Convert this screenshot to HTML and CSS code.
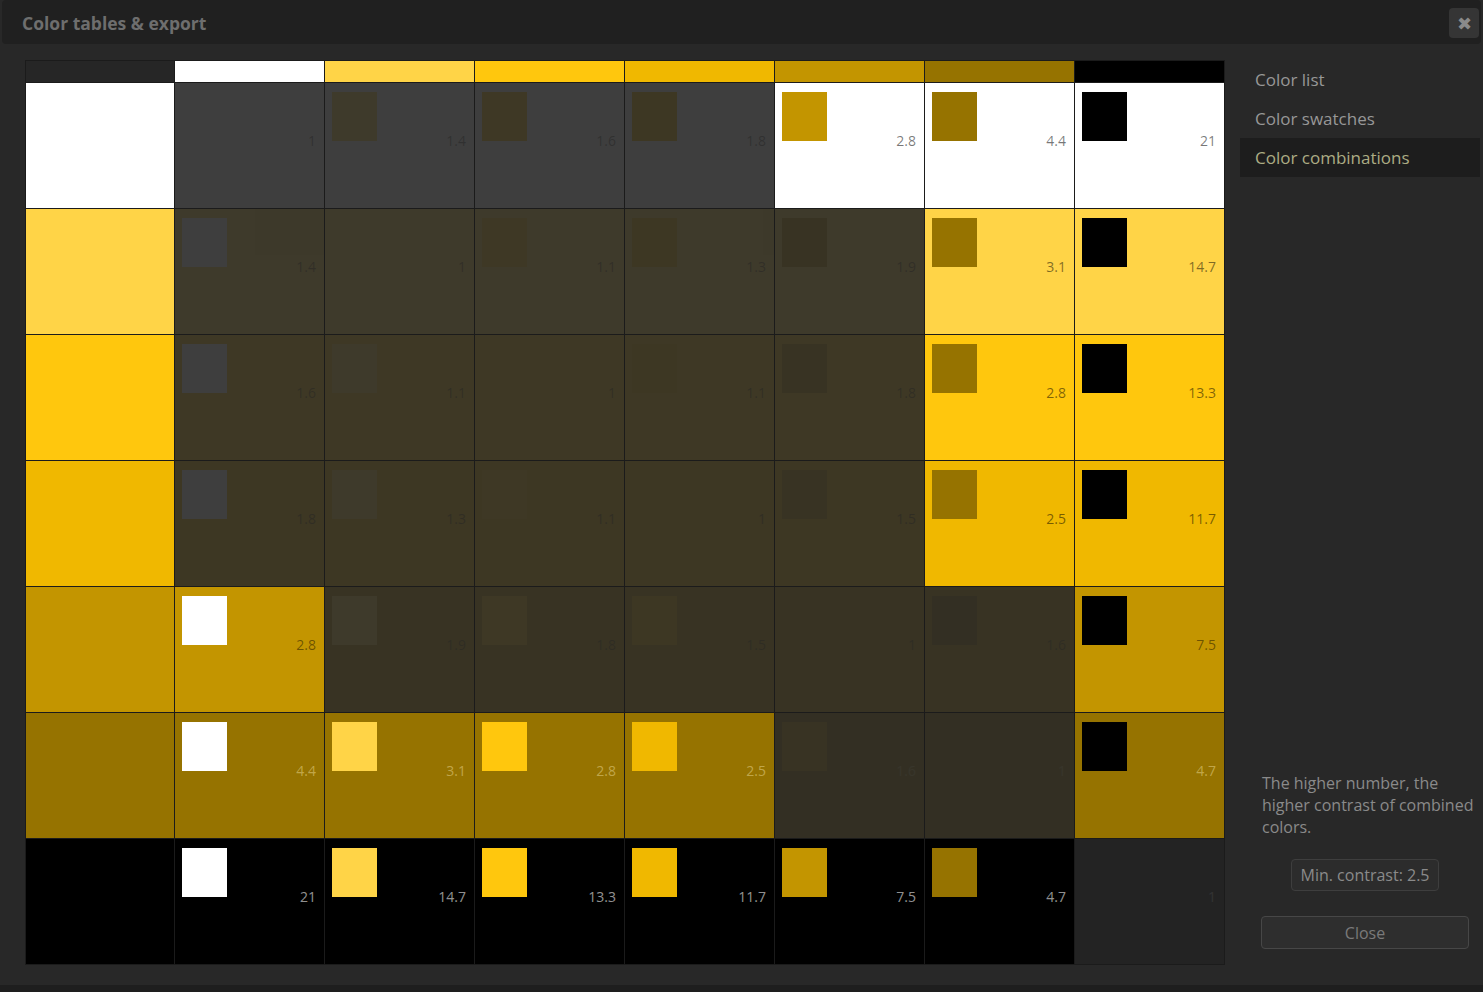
FILE: index.html
```html
<!DOCTYPE html>
<html lang="en">
<head>
    <meta charset="UTF-8">
    <title>Color tables &amp; export</title>
    <link rel="stylesheet" href="styles.css">
</head>
<body>

<div class="dialog">
    <div class="titlebar">
        <span class="title">Color tables &amp; export</span>
        <span class="close-x">&#10006;</span>
    </div>

    <div class="content">
        <div class="grid" id="grid"></div>

        <div class="side">
            <div class="menu">
                <div class="menu-item">Color list</div>
                <div class="menu-item">Color swatches</div>
                <div class="menu-item active">Color combinations</div>
            </div>

            <div class="side-bottom">
                <p class="help">The higher number, the higher contrast of combined colors.</p>
                <button class="btn btn-min">Min. contrast: 2.5</button>
                <button class="btn btn-close">Close</button>
            </div>
        </div>
    </div>
</div>

<script>
    let colors = ["#ffffff", "#ffd447", "#ffc70d", "#f0b800", "#c39500", "#967300", "#000000"];
    let textColors = ["rgba(0,0,0,.53)", "rgba(0,0,0,.5)", "rgba(0,0,0,.5)", "rgba(0,0,0,.5)", "rgba(0,0,0,.45)", "rgba(255,240,180,.42)", "rgba(255,255,255,.58)"];
    let contrast = [
        [1, 1.4, 1.6, 1.8, 2.8, 4.4, 21],
        [1.4, 1, 1.1, 1.3, 1.9, 3.1, 14.7],
        [1.6, 1.1, 1, 1.1, 1.8, 2.8, 13.3],
        [1.8, 1.3, 1.1, 1, 1.5, 2.5, 11.7],
        [2.8, 1.9, 1.8, 1.5, 1, 1.6, 7.5],
        [4.4, 3.1, 2.8, 2.5, 1.6, 1, 4.7],
        [21, 14.7, 13.3, 11.7, 7.5, 4.7, 1]
    ];
    let minContrast = 2.5;

    let grid = document.getElementById("grid");
    let html = `<div class="head corner"></div>`;
    colors.forEach(c => {
        html += `<div class="head" style="background:${c}"></div>`;
    });
    colors.forEach((rowColor, r) => {
        html += `<div class="label" style="background:${rowColor}"></div>`;
        colors.forEach((colColor, c) => {
            let value = contrast[r][c];
            let dim = value < minContrast ? " dim" : "";
            html += `
                <div class="cell">
                    <div class="fill${dim}" style="background:${rowColor};color:${textColors[r]}">
                        <span class="swatch" style="background:${colColor}"></span>
                        <span class="num">${value}</span>
                    </div>
                </div>`;
        });
    });
    grid.innerHTML = html;
</script>

</body>
</html>
```

FILE: styles.css
```css
body { margin: 0; background: #1e1e1e; font-family: "Open Sans", "Noto Sans", sans-serif; }

.dialog { height: 985px; background: #282828; display: flex; flex-direction: column; }

.titlebar { height: 44px; margin: 0 2px; background: #202020; border-radius: 4px; display: flex; align-items: center; justify-content: space-between; padding: 2px 2px 0 20px; box-sizing: border-box; }
.title { font-size: 17.5px; font-weight: bold; color: #6e6e6e; }
.close-x { width: 30px; height: 30px; background: #353535; border-radius: 4px; color: #8a8a8a; font-size: 18px; display: flex; align-items: center; justify-content: center; }

.content { display: flex; padding: 16px 0 0 25px; }

.grid { display: grid; grid-template-columns: 148px repeat(7, 149px); grid-template-rows: 21px repeat(7, 125px); gap: 1px; padding: 1px; background: #1b1b1b; }
.head.corner { background: #262626; }
.cell { background: #282828; }
.fill { height: 100%; box-sizing: border-box; padding: 9px 8px 0 7px; display: flex; justify-content: space-between; align-items: flex-start; }
.fill.dim { opacity: .1; }
.swatch { width: 45px; height: 49px; }
.num { font-size: 14px; line-height: 22px; margin-top: 38px; }

.side { width: 240px; margin-left: 15px; display: flex; flex-direction: column; }
.menu-item { height: 39px; line-height: 39px; padding-left: 15px; font-size: 17px; color: #979797; }
.menu-item.active { background: #1d1d1d; color: #acac84; }

.side-bottom { margin-top: auto; padding: 0 12px 16px 22px; display: flex; flex-direction: column; align-items: center; }
.help { margin: 0 -12px 21px 0; font-size: 16px; line-height: 22px; color: #8a8a8a; align-self: stretch; }
.btn { font-family: inherit; font-size: 16px; color: #8a8a8a; background: #2c2c2c; border: 1px solid #3e3e3e; border-radius: 4px; }
.btn-min { width: 148px; height: 32px; }
.btn-close { margin-top: 25px; width: 208px; height: 33px; color: #7a7a7a; background: #2e2e2e; border-color: #474747; }
```
